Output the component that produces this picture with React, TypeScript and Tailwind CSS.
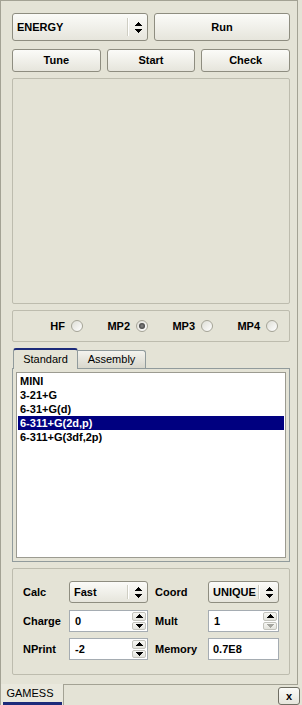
import React from "react";

const UpDown = ({ color = "#000" }: { color?: string }) => (
  <svg width="7" height="11" viewBox="0 0 7 11" shapeRendering="crispEdges">
    <rect x="3" y="0" width="1" height="1" fill={color} />
    <rect x="2" y="1" width="3" height="1" fill={color} />
    <rect x="1" y="2" width="5" height="1" fill={color} />
    <rect x="0" y="3" width="7" height="1" fill={color} />
    <rect x="0" y="7" width="7" height="1" fill={color} />
    <rect x="1" y="8" width="5" height="1" fill={color} />
    <rect x="2" y="9" width="3" height="1" fill={color} />
    <rect x="3" y="10" width="1" height="1" fill={color} />
  </svg>
);

const Tri = ({ up, color = "#000" }: { up?: boolean; color?: string }) => (
  <svg width="7" height="4" viewBox="0 0 7 4" shapeRendering="crispEdges">
    {up ? (
      <>
        <rect x="3" y="0" width="1" height="1" fill={color} />
        <rect x="2" y="1" width="3" height="1" fill={color} />
        <rect x="1" y="2" width="5" height="1" fill={color} />
        <rect x="0" y="3" width="7" height="1" fill={color} />
      </>
    ) : (
      <>
        <rect x="0" y="0" width="7" height="1" fill={color} />
        <rect x="1" y="1" width="5" height="1" fill={color} />
        <rect x="2" y="2" width="3" height="1" fill={color} />
        <rect x="3" y="3" width="1" height="1" fill={color} />
      </>
    )}
  </svg>
);

const Btn = ({ children }: { children: React.ReactNode }) => (
  <div className="flex h-full items-center justify-center rounded-[3px] border border-[#8e8d80] bg-linear-to-b from-[#fbfbf8] to-[#e6e5dc] text-[11px] font-bold text-black">
    {children}
  </div>
);

const Combo = ({ label, h = "h-full", pl = "pl-[4px]" }: { label: string; h?: string; pl?: string }) => (
  <div className={`flex ${h} items-center justify-between rounded-[3px] border border-[#8e8d80] bg-linear-to-b from-[#fbfbf8] to-[#e6e5dc] text-[11px] font-bold text-black`}>
    <span className={pl}>{label}</span>
    <div className="flex h-full items-center">
      <div className="h-[70%] w-px bg-[#cfcec3]" />
      <div className="h-[70%] w-px bg-white" />
      <div className="flex w-[18px] justify-center">
        <UpDown />
      </div>
    </div>
  </div>
);

const SpinBtn = ({ up, disabled }: { up?: boolean; disabled?: boolean }) => (
  <div className="flex flex-1 items-center justify-center rounded-[2px] border border-[#c3c3bc] bg-linear-to-b from-[#f7f7f4] to-[#e3e3dc]">
    <Tri up={up} color={disabled ? "#a6a6a0" : "#000"} />
  </div>
);

const Spin = ({ value, downDisabled }: { value: string; downDisabled?: boolean }) => (
  <div className="flex h-[22px] border border-[#a5acb2] bg-white text-[11px] font-bold">
    <span className="flex flex-1 items-center pl-[5px]">{value}</span>
    <div className="flex w-[15px] flex-col gap-px py-px pr-px">
      <SpinBtn up />
      <SpinBtn disabled={downDisabled} />
    </div>
  </div>
);

const Radio = ({ label, checked }: { label: string; checked?: boolean }) => (
  <div className="flex items-center justify-end gap-[6px] text-[11px] font-bold">
    <span>{label}</span>
    <div className="flex h-[12px] w-[12px] items-center justify-center rounded-full border border-[#a5a497] bg-linear-to-br from-[#deded6] to-white">
      {checked && <div className="h-[6px] w-[6px] rounded-full bg-radial from-[#8a8a8a] to-[#2a2a2a]" />}
    </div>
  </div>
);

const items = ["MINI", "3-21+G", "6-31+G(d)", "6-311+G(2d,p)", "6-311+G(3df,2p)"];

export default function App() {
  return (
    <div className="flex h-[705px] w-[302px] flex-col bg-[#e4e3d6] font-['Liberation_Sans',Arial,sans-serif] text-black">
      <div className="flex h-[684px] w-[298px] flex-col border-l border-r border-t border-[#a3a294] pb-[8px] pl-[11px] pr-[7px] pt-[12px]">
        <div className="grid h-[28px] grid-cols-2 gap-[6px]">
          <Combo label="ENERGY" />
          <Btn>Run</Btn>
        </div>
        <div className="mt-[8px] grid h-[23px] grid-cols-3 gap-[6px]">
          <Btn>Tune</Btn>
          <Btn>Start</Btn>
          <Btn>Check</Btn>
        </div>
        <div className="mt-[6px] h-[226px] rounded-[2px] border border-[#bdbcae]" />
        <div className="mt-[6px] grid h-[32px] grid-cols-[65px_65px_65px_65px] items-center rounded-[2px] border border-[#bdbcae] pl-[5px]">
          <Radio label="HF" />
          <Radio label="MP2" checked />
          <Radio label="MP3" />
          <Radio label="MP4" />
        </div>
        <div className="mt-[6px] flex h-[20px] items-end pl-px text-[11px]">
          <div className="relative z-10 -mb-px flex h-[21px] w-[65px] items-center justify-center rounded-t-[3px] border-l border-r border-t-2 border-[#919b9c] border-t-[#1c2a7a] bg-[#e4e3d6] pb-px">
            Standard
          </div>
          <div className="flex h-[18px] w-[68px] items-center justify-center rounded-tr-[3px] border-r border-t border-[#919b9c] bg-linear-to-b from-[#f4f3ee] to-[#d8d7cc]">
            Assembly
          </div>
        </div>
        <div className="h-[194px] border border-[#919b9c] p-[3px]">
          <div className="flex h-full flex-col border border-[#9c9b91] bg-white px-px pt-px text-[11px] font-bold">
            {items.map((it, i) => (
              <div
                key={it}
                className={`flex h-[14px] items-center pl-[2px] ${i === 3 ? "bg-[#000080] text-white" : ""}`}
              >
                {it}
              </div>
            ))}
          </div>
        </div>
        <div className="mt-[6px] flex h-[107px] flex-col gap-[6px] rounded-[2px] border border-[#bdbcae] pl-[10px] pt-[12px] text-[11px] font-bold">
          <div className="grid h-[22px] grid-cols-[46px_79px_60px_71px] items-center">
            <span>Calc</span>
            <Combo label="Fast" h="h-[22px]" />
            <span className="pl-[7px]">Coord</span>
            <Combo label="UNIQUE" h="h-[22px]" />
          </div>
          <div className="mt-px grid h-[22px] grid-cols-[46px_79px_60px_71px] items-center">
            <span>Charge</span>
            <Spin value="0" />
            <span className="pl-[7px]">Mult</span>
            <Spin value="1" downDisabled />
          </div>
          <div className="grid h-[22px] grid-cols-[46px_79px_60px_71px] items-center">
            <span>NPrint</span>
            <Spin value="-2" />
            <span className="pl-[7px]">Memory</span>
            <div className="flex h-[22px] items-center border border-[#a5acb2] bg-white pl-[4px]">0.7E8</div>
          </div>
        </div>
      </div>
      <div className="flex h-[21px]">
        <div className="flex h-[21px] w-[64px] flex-col border-l border-r border-[#a3a294] bg-[#e9e8dd]">
          <div className="flex flex-1 items-center justify-center pr-[4px] text-[11px]">GAMESS</div>
          <div className="ml-[2px] h-[3px] w-[59px] bg-[#1c2a7a]" />
        </div>
        <div className="flex flex-1 flex-col">
          <div className="h-px w-[234px] bg-[#a3a294]" />
          <div className="flex justify-end pr-[2px] pt-[2px]">
            <div className="flex h-[18px] w-[22px] items-center justify-center rounded-[3px] border border-[#6f6e63] bg-linear-to-b from-[#fbfbf8] to-[#e6e5dc] text-[11px] font-bold">
              x
            </div>
          </div>
        </div>
      </div>
    </div>
  );
}
